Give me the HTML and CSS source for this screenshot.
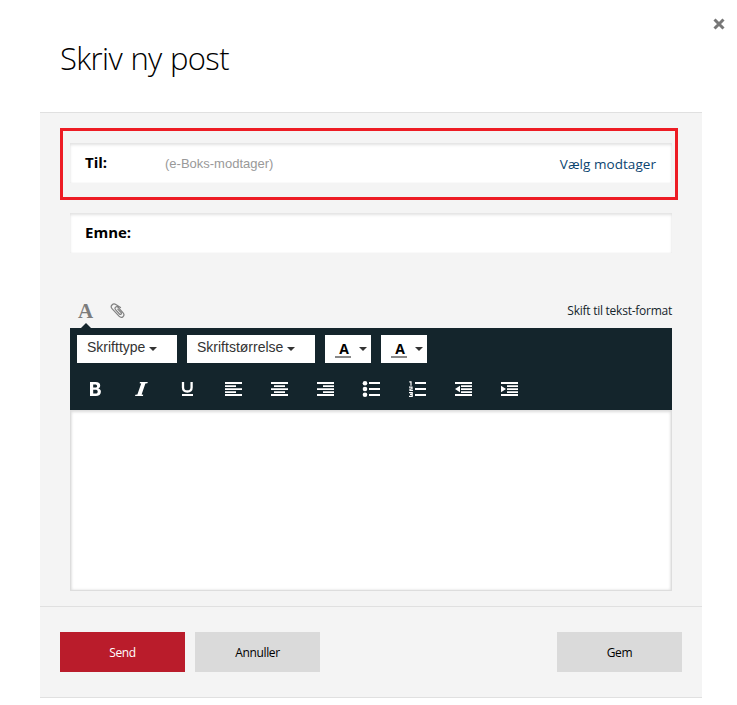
FILE: index.html
```html
<!DOCTYPE html>
<html lang="da">
<head>
<meta charset="utf-8">
<title>Skriv ny post</title>
<link rel="stylesheet" href="styles.css">
</head>
<body>
<div class="dialog">
  <header class="header">
    <h1 class="title">Skriv ny post</h1>
    <svg class="close" width="12" height="12" viewBox="0 0 12 12"><path d="M1.500 1.500l9 9M10.500 1.500l-9 9" stroke="#777" stroke-width="3"/></svg>
  </header>
  <main class="panel">
    <div class="highlight">
      <div class="field">
        <span class="label label-to">Til:</span>
        <span class="hint">(e-Boks-modtager)</span>
        <a class="choose">Vælg modtager</a>
      </div>
    </div>
    <div class="field field-subject"><span class="label label-subject">Emne:</span></div>
    <div class="tabs">
      <span class="tab-font">A</span>
      <svg class="clip" width="16" height="16" viewBox="0 0 16 16" fill="none" stroke="#808080" stroke-width="1.2" stroke-linecap="round"><path d="M10.500 4.500L5.800 1.500C3-.2-.3 3.200 2 5.600l7 7.600c2.800 2.900 6.500-.5 4.100-3.400L8.200 4.400C6.400 2.600 4 4.700 5.500 6.700l4 4.300c1 1 2.500-.1 1.600-1.300L7.800 6.200"/></svg>
      <span class="switch">Skift til tekst-format</span>
    </div>
    <div class="toolbar">
      <div class="selects">
        <div class="select type"><span class="type-text">Skrifttype</span><i class="caret"></i></div>
        <div class="select size"><span class="size-text">Skriftstørrelse</span><i class="caret"></i></div>
        <div class="select color"><b class="swatch">A</b><i class="caret"></i></div>
        <div class="select color"><b class="swatch">A</b><i class="caret"></i></div>
      </div>
      <div class="icons">
        <span class="cell"><svg width="18" height="16" viewBox="0 0 18 16"><path fill="#fff" fill-rule="evenodd" d="M4 1h5.500c3.300 0 4.700 1.300 4.700 3.500 0 1.500-.8 2.500-1.900 3 1.700.4 2.600 1.600 2.600 3.300 0 2.800-1.900 4.200-5.100 4.200H4zm3.200 2.400v3.200h1.800c1.500 0 2.100-.5 2.100-1.600s-.7-1.600-2.100-1.600zm0 5.400v3.800h2c1.700 0 2.500-.6 2.500-1.900s-.8-1.900-2.500-1.900z"/></svg></span>
        <span class="cell"><svg width="18" height="16" viewBox="0 0 18 16"><path fill="#fff" d="M8 1h7.800l-.4 1.200-2 .3L9.600 13.500l1.700.3-.4 1.200H3l.4-1.200 2-.3 3.800-11-1.600-.3z"/></svg></span>
        <span class="cell"><svg width="18" height="16" viewBox="0 0 18 16"><path fill="none" stroke="#fff" stroke-width="2.300" d="M5 1v5.500c0 2.700 1.500 4 4.300 4s4.300-1.300 4.300-4V1"/><path fill="#fff" d="M4 13h11v2H4z"/></svg></span>
        <span class="cell"><svg width="18" height="16" viewBox="0 0 18 16"><path fill="#fff" d="M1 1h17v2H1zm0 3.200h11v1.700H1zm0 3h17v1.700H1zm0 3h11v1.700H1zM1 13h17v2H1z"/></svg></span>
        <span class="cell"><svg width="18" height="16" viewBox="0 0 18 16"><path fill="#fff" d="M1 1h17v2H1zm3 3.200h11v1.700H4zM1 7.200h17v1.700H1zm3 3h11v1.700H4zM1 13h17v2H1z"/></svg></span>
        <span class="cell"><svg width="18" height="16" viewBox="0 0 18 16"><path fill="#fff" d="M1 1h17v2H1zm6 3.200h11v1.700H7zM1 7.200h17v1.700H1zm6 3h11v1.700H7zM1 13h17v2H1z"/></svg></span>
        <span class="cell"><svg width="18" height="16" viewBox="0 0 18 16"><path fill="#fff" d="M7 1h11v2H7zm0 6h11v2H7zm0 6h11v2H7z"/><circle cx="3" cy="2.300" r="2.300" fill="#fff"/><circle cx="3" cy="8" r="2.300" fill="#fff"/><circle cx="3" cy="13.700" r="2.300" fill="#fff"/></svg></span>
        <span class="cell"><svg width="18" height="16" viewBox="0 0 18 16"><path fill="#fff" d="M7 1h11v2H7zm0 6h11v2H7zm0 6h11v2H7z"/><path fill="none" stroke="#fff" stroke-width="1.200" d="M1.300 .9H3v3.800M1 6.200h3v1.800H2v1.500h3M1 11.600h3.200v3.700H1M2 13.400h2"/></svg></span>
        <span class="cell"><svg width="18" height="16" viewBox="0 0 18 16"><path fill="#fff" d="M1 1h17v2H1zm6 3.200h11v1.700H7zm0 3h11v1.700H7zm0 3h11v1.700H7zM1 13h17v2H1zM6 4.800v6.400L1 8z"/></svg></span>
        <span class="cell"><svg width="18" height="16" viewBox="0 0 18 16"><path fill="#fff" d="M1 1h17v2H1zm6 3.200h11v1.700H7zm0 3h11v1.700H7zm0 3h11v1.700H7zM1 13h17v2H1zM1 4.800v6.400L6 8z"/></svg></span>
      </div>
    </div>
    <div class="editor"></div>
    <footer class="footer">
      <button class="btn send">Send</button>
      <button class="btn cancel">Annuller</button>
      <button class="btn save">Gem</button>
    </footer>
  </main>
</div>
</body>
</html>
```
FILE: styles.css
```css
* { box-sizing: border-box; }
body { margin: 0; background: #fff; color: #000; font-family: "Open Sans", "Noto Sans", sans-serif; }
.dialog { width: 737px; height: 705px; padding: 0 35px 0 40px; }
.header { position: relative; height: 112px; padding: 36px 0 0 20px; }
.title { margin: 0; font-size: 31px; line-height: 44px; font-weight: 300; letter-spacing: -0.65px; word-spacing: 1px; }
.close { position: absolute; right: -23px; top: 18px; }
.panel { width: 662px; height: 586px; background: #f4f4f4; border-top: 1px solid #e0e0e0; border-bottom: 1px solid #e0e0e0; padding-top: 15px; }
.highlight { width: 618px; height: 72px; margin-left: 20px; border: 3px solid #ed1c24; padding: 12px 0 0 7px; }
.field { width: 602px; height: 40px; background: #fff; box-shadow: inset 0 2px 3px #e2e2e2, inset 0 0 2px #eee; display: flex; align-items: center; padding: 0 16px 0 15px; }
.field-subject { margin: 13px 0 0 30px; }
.label { margin-bottom: 2px; font-size: 15px; line-height: 20px; font-weight: 700; }
.label-to { width: 80px; }
.hint { margin-top: 2px; font: 13px/20px "Liberation Sans", Arial, sans-serif; color: #999; }
.choose { margin: 2px 0 0 auto; color: #0b4470; font-size: 13.5px; line-height: 20px; letter-spacing: 0.05px; }
.tabs { height: 75px; margin: 0 30px; padding: 47px 0 0 8px; display: flex; align-items: flex-start; }
.tab-font { position: relative; top: -1px; width: 32px; font: bold 21px/24px "Liberation Serif", serif; color: #7c7c7c; }
.tab-font::after { content: ""; position: absolute; left: 3px; top: 24px; border: solid transparent; border-width: 0 5px 5px; border-bottom-color: #14252c; }
.clip { margin-top: 3px; }
.switch { margin-left: auto; font-size: 12px; line-height: 22px; color: #14252c; letter-spacing: -0.25px; }
.toolbar { width: 602px; height: 82px; margin-left: 30px; padding: 7px 0 0; background: #14252c; }
.selects { display: flex; gap: 10px; padding-left: 7px; }
.select { height: 28px; background: #fff; color: #333; display: flex; align-items: center; font: 14px/24px "Liberation Sans", Arial, sans-serif; padding: 0 0 4px 10px; }
.type { width: 100px; }
.size { width: 128px; }
.color { width: 46px; padding: 0 0 0 10px; }
.caret { margin: 4px 0 0 4px; border: solid transparent; border-width: 4px 4px 0; border-top-color: #333; }
.swatch { width: 16px; height: 16px; margin-top: 1px; padding-left: 2px; border-bottom: 2px solid #888; font: bold 14px/13px "Open Sans", sans-serif; color: #000; text-align: center; }
.color .caret { margin: 0 0 0 8px; }
.icons { display: flex; padding: 18px 0 0 2px; }
.cell { width: 46px; height: 16px; display: flex; justify-content: center; }
.editor { width: 602px; height: 181px; margin-left: 30px; background: #fff; border: solid #ddd; border-width: 0 1px 1px; box-shadow: inset 0 2px 3px #ddd, inset 0 0 3px #ddd; }
.footer { margin-top: 15px; height: 91px; border-top: 1px solid #e0e0e0; padding: 25px 20px 0; display: flex; gap: 10px; }
.btn { width: 125px; height: 40px; border: 0; padding: 2px 0 0; background: #dadada; color: #000; font: 12px/20px "Open Sans", sans-serif; letter-spacing: -0.35px; }
.send { background: #ba1c2b; color: #fff; }
.save { margin-left: auto; }
```
